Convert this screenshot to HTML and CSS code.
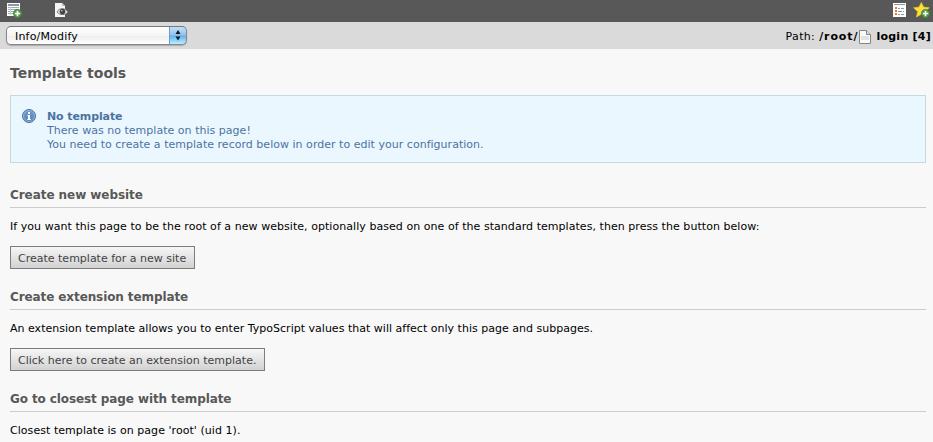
FILE: index.html
```html
<!DOCTYPE html>
<html lang="en">
<head>
<meta charset="utf-8">
<title>Template tools</title>
<link rel="stylesheet" href="styles.css">
</head>
<body>
<header class="toolbar">
  <svg class="icon icon-new" width="16" height="16" viewBox="0 0 16 16">
    <path fill="#fff" d="M1 1h13v13H1z"/><path fill="#8799ab" d="M2 2h11v2H2z"/>
    <path stroke="#a3a9af" d="M2 5.500h11M2 7.500h11M2 9.500h11M2 11.500h6"/><path stroke="#ccd2d8" d="M4.500 5v8"/>
    <circle cx="11.500" cy="11.500" r="4.200" fill="#4b9a42" stroke="#378632" stroke-width=".6"/><path stroke="#fff" stroke-width="1.700" d="M11.500 8.800v5.400M8.800 11.500h5.400"/>
  </svg>
  <svg class="icon icon-view" width="16" height="16" viewBox="0 0 16 16">
    <path fill="#f6f6f6" d="M2 1h7l3 3v11H2z"/><path fill="#bbb" d="M9 1v3h3z"/>
    <path fill="#e2e2e2" stroke="#858585" d="M4 10C6 5.500 12 5.500 15 10 12 13.500 7 13.500 4 10z"/>
    <circle cx="9.500" cy="9.600" r="2.800" fill="#444"/><circle cx="8.800" cy="8.800" r=".8" fill="#ddd"/>
  </svg>
  <svg class="icon icon-list" width="16" height="16" viewBox="0 0 16 16">
    <path fill="#fff" d="M2 1h13v14H2z"/><path fill="#8798aa" d="M3 2h11v1H3z"/>
    <path fill="#f27825" d="M4 5h2v2H4zM4 8h2v2H4zM4 11h2v2H4z"/><path stroke="#8d99a6" d="M7 6.500h2m1 0h3M7 9.500h4m1 0h1M7 12.500h2m1 0h3"/>
  </svg>
  <svg class="icon icon-star" width="17" height="16" viewBox="0 0 17 16">
    <path fill="#ffdf3b" stroke="#efbd20" stroke-width=".8" stroke-linejoin="round" d="M8.300.5l2.300 4.600 5.600.7-4.100 3.800 1.100 5.400-4.900-2.700-4.800 2.700 1.100-5.400L.6 5.800l5.400-.7z"/>
    <circle cx="12.500" cy="11.500" r="4.200" fill="#4b9a42" stroke="#378632" stroke-width=".6"/><path stroke="#fff" stroke-width="1.600" d="M12.500 8.800v5.400M9.800 11.500h5.400"/>
  </svg>
</header>
<div class="docheader">
  <div class="select"><span class="select-label">Info/Modify</span>
    <span class="select-arrows"><svg width="18" height="17" viewBox="0 0 18 17"><path fill="#101820" d="M9 3l2.500 4h-5zM9 13.500l2.500-4h-5z"/></svg></span>
  </div>
  <div class="path"><span class="path-label">Path:</span><b class="path-root">/root/</b>
    <svg class="page-icon" width="12" height="14" viewBox="0 0 12 14"><path fill="#fafafa" stroke="#858585" d="M.5.500h7l4 4v9H.5z"/><path fill="#ddd" stroke="#858585" d="M7.500.500v4h4"/><path fill="#e2e2e2" d="M2 6h8v4H2z"/></svg>
    <b class="path-page">login [4]</b></div>
</div>
<main class="content">
  <h1>Template tools</h1>
  <section class="message">
    <svg class="info-icon" width="14" height="14" viewBox="0 0 14 14">
      <defs><linearGradient id="info" x2="0" y2="1"><stop stop-color="#6b9bd2"/><stop offset="1" stop-color="#5583bd"/></linearGradient></defs>
      <circle cx="7" cy="7" r="6.500" fill="url(#info)" stroke="#4c6f9e"/><circle cx="7" cy="7" r="5.500" fill="none" stroke="#a5c4e5" stroke-width=".7"/>
      <path fill="#fff" d="M6 3h2v2H6zM5.500 6H8v4h.8v1H5.300v-1H6V7h-.5z"/>
    </svg>
    <div class="message-text"><b class="t-none">No template</b><br><span class="t-line">There was no template on this page!</span><br><span class="t-line">You need to create a template record below in order to edit your configuration.</span></div>
  </section>
  <section class="block">
    <h2 class="t-website">Create new website</h2>
    <p class="t-want">If you want this page to be the root of a new website, optionally based on one of the standard templates, then press the button below:</p>
    <button class="btn-site">Create template for a new site</button>
  </section>
  <section class="block">
    <h2 class="t-ext">Create extension template</h2>
    <p class="t-allows">An extension template allows you to enter TypoScript values that will affect only this page and subpages.</p>
    <button class="btn-ext">Click here to create an extension template.</button>
  </section>
  <section class="block block-last">
    <h2 class="t-ext">Go to closest page with template</h2>
    <p class="t-want">Closest template is on page 'root' (uid 1).</p>
  </section>
</main>
</body>
</html>
```
FILE: styles.css
```css
* { box-sizing: border-box; }
body { margin: 0; background: #f8f8f8; color: #000; font: 11px/14px Verdana, "DejaVu Sans", sans-serif; }
svg { display: block; flex: none; }
.toolbar { height: 22px; padding: 2px 3px 0 6px; background: #585858; display: flex; }
.icon-view { margin-left: 31px; }
.icon-list { margin-left: auto; }
.icon-star { margin-left: 6px; }
.docheader { height: 27px; padding: 0 2px 0 6px; background: #dadada; display: flex; align-items: center; justify-content: space-between; }
.select { width: 181px; height: 19px; border: 1px solid #888; border-top-color: #777; border-radius: 5px; background: linear-gradient(#fff, #f5f5f5 50%, #ededed 51%, #fff); box-shadow: 0 1px 1px #aaa; display: flex; justify-content: space-between; align-items: center; padding-left: 8px; overflow: hidden; }
.select-label { padding-top: 2px; letter-spacing: .18px; }
.select-arrows { width: 18px; height: 19px; margin-right: -1px; border: 1px solid #294b9c; border-left-color: #6c9bd0; border-radius: 0 5px 5px 0; background: linear-gradient(#c5e0f7, #8fc2ee 48%, #67adec 52%, #b4f2ff); display: flex; align-items: center; justify-content: center; }
.path { display: flex; align-items: center; height: 27px; padding-top: 2px; white-space: nowrap; }
.path-label { letter-spacing: .35px; }
.path-root { margin-left: 4px; letter-spacing: .9px; }
.page-icon { margin: 1px 5px 0 1px; }
.path-page { letter-spacing: .25px; }
.content { padding: 15px 7px 0 10px; }
h1, h2, p { margin: 0; white-space: nowrap; }
h1 { font-size: 14px; line-height: 18px; color: #585858; }
.message { height: 68px; margin-top: 13px; padding: 13px 11px; border: 1px solid #c3dae2; background: #eaf7ff; color: #4c73a1; display: flex; }
.message-text { margin-left: 11px; padding-top: 1px; white-space: nowrap; }
.t-none { letter-spacing: -.1px; }
.t-line { letter-spacing: .025px; }
.block { height: 102px; padding-top: 24px; }
.block-last { height: 75px; }
h2 { height: 21px; border-bottom: 1px solid #ccc; font-size: 12px; line-height: 16px; color: #585858; }
.t-website { letter-spacing: -.06px; }
.t-ext { letter-spacing: -.1px; }
.t-want { letter-spacing: .05px; }
.t-allows { letter-spacing: .014px; }
p { margin-top: 12px; }
button { display: block; height: 23px; margin-top: 12px; padding: 2px 7px 0; border: 1px solid #7c7c7c; border-radius: 0; background: linear-gradient(#f6f6f6, #d2d2d2); color: #434343; font: inherit; white-space: nowrap; text-align: left; }
.btn-site { width: 185px; }
.btn-ext { width: 255px; }
```
